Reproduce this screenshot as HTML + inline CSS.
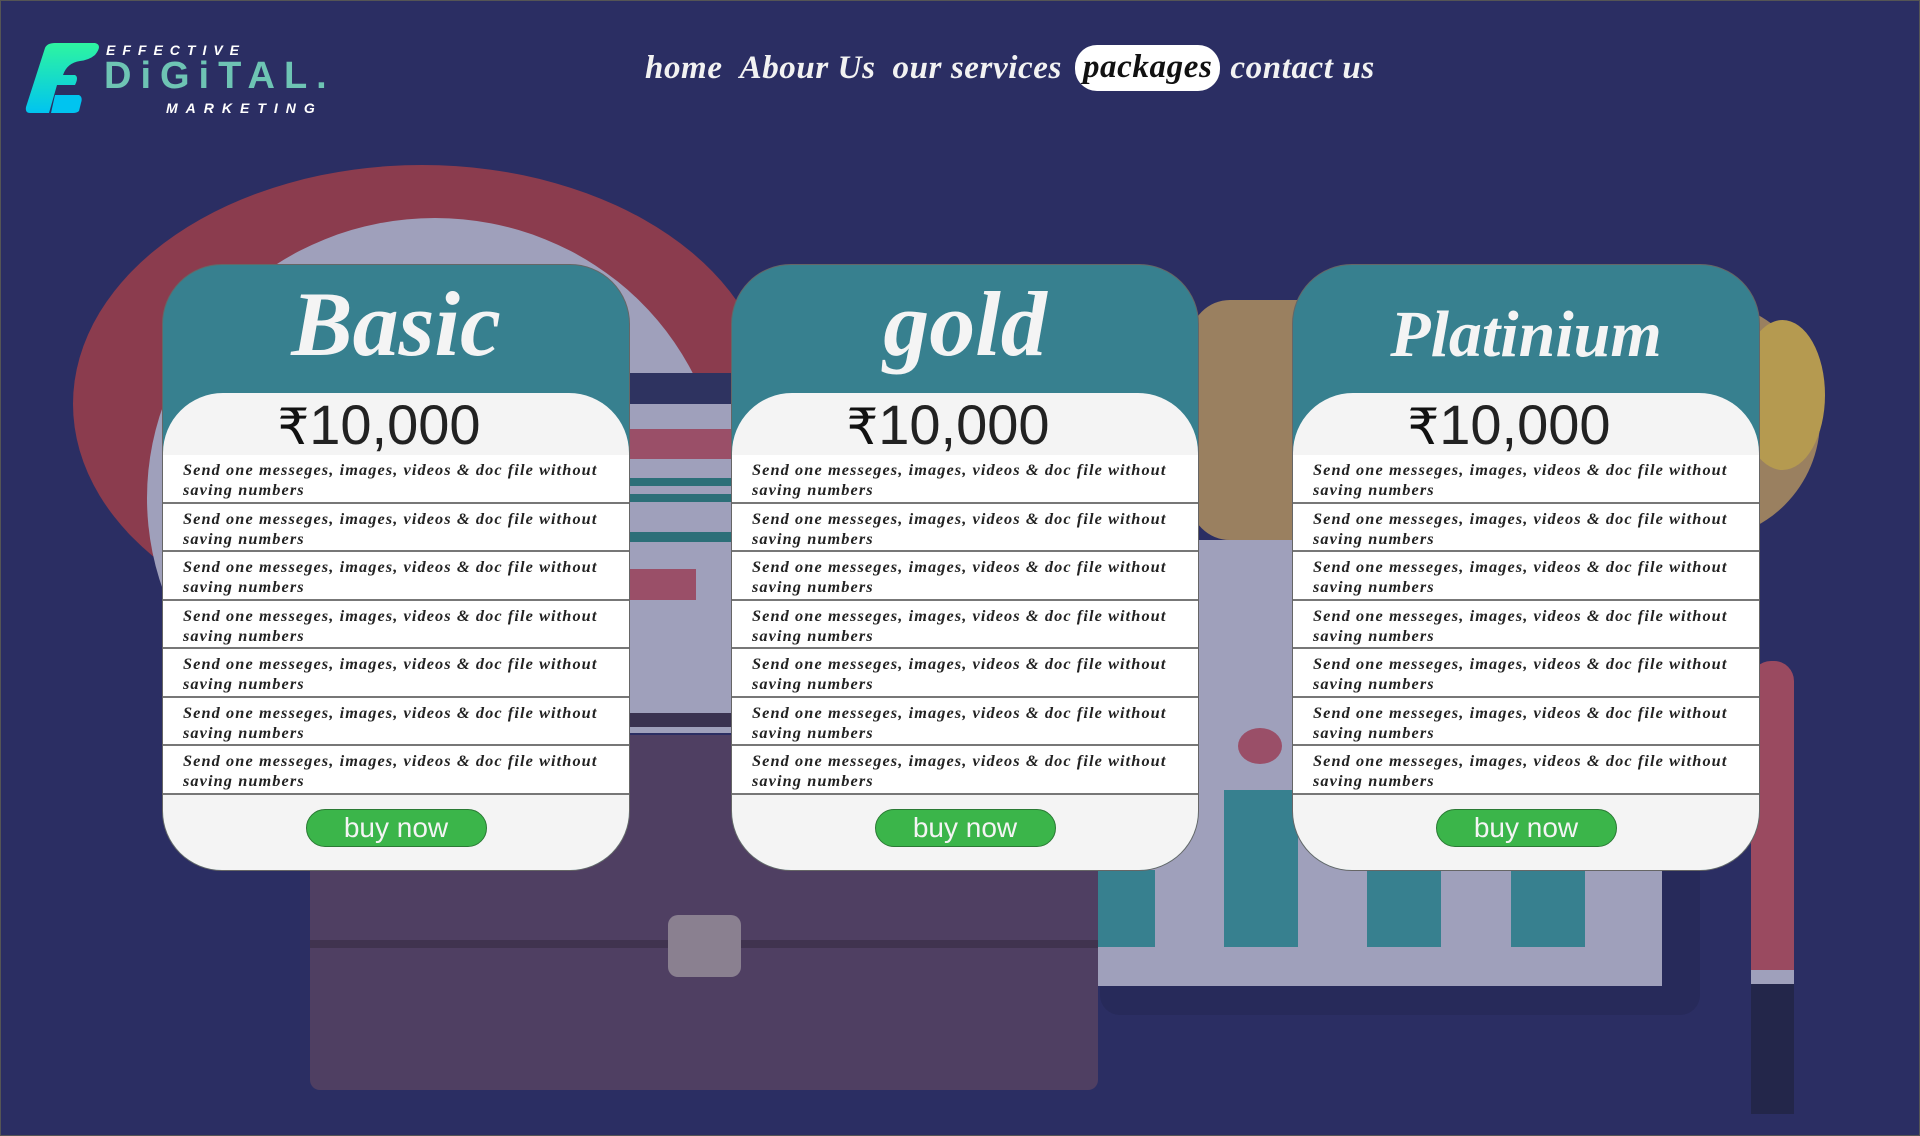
<!DOCTYPE html>
<html><head><meta charset="utf-8">
<style>
*{margin:0;padding:0;box-sizing:border-box}
html,body{width:1920px;height:1136px;overflow:hidden}
body{background:#2b2e63;position:relative;font-family:"Liberation Sans",sans-serif;outline:1px solid #555;outline-offset:-1px}
.a{position:absolute}
.nav{position:absolute;top:45px;left:645px;height:46px;display:flex;align-items:center;font-family:"Liberation Serif",serif;font-style:italic;font-weight:bold;font-size:33px;color:#f2f2f2;letter-spacing:0.6px}
.nav span{margin-right:17px;white-space:nowrap}
.nav .act{background:#fff;color:#111;border-radius:22px;padding:0 8px;height:46px;line-height:44px;margin-right:10px;margin-left:-4px}
.card{position:absolute;top:264px;width:468px;height:607px;background:#37808f;border:1px solid #666;border-radius:60px;overflow:hidden}
.card h2{height:128px;text-align:center;color:#f4f4f4;font-family:"Liberation Serif",serif;font-style:italic;font-weight:bold;font-size:92px;line-height:118px}
.price{background:#f4f4f4;height:62px;border-radius:60px 60px 0 0;text-align:center;font-size:56px;color:#222;line-height:64px;padding-right:34px}
.price b{font-family:"DejaVu Sans",sans-serif;font-weight:normal;color:#111;font-size:50px}
.row{background:#fff;border-bottom:2px solid #777;height:48.5px;padding:5px 8px 0 20px;font-family:"Liberation Serif",serif;font-style:italic;font-weight:bold;font-size:16.3px;line-height:20px;color:#222;letter-spacing:1.1px;white-space:nowrap}
.row:first-of-type{border-top:2px solid #777}
.foot{background:#f4f4f4;height:100%;text-align:center;padding-top:14px}
.btn{display:inline-block;width:181px;height:38px;border-radius:19px;background:#3bb54a;border:1px solid #2a7a34;color:#f4f4f4;font-size:28px;line-height:35px}
</style></head><body>
<div class="a" style="left:73px;top:165px;width:698px;height:478px;border-radius:50%;background:#8b3c4e"></div>
<div class="a" style="left:147px;top:218px;width:576px;height:560px;border-radius:50%;background:#9fa0bb"></div>
<div class="a" style="left:1100px;top:560px;width:600px;height:455px;background:#272a5a;border-radius:20px"></div>
<div class="a" style="left:1190px;top:300px;width:630px;height:240px;border-radius:40px 120px 120px 40px;background:#9a8060"></div>
<div class="a" style="left:1740px;top:320px;width:85px;height:150px;border-radius:50%;background:#b59a50"></div>
<div class="a" style="left:630px;top:373px;width:102px;height:360px;background:#9fa0bb"></div>
<div class="a" style="left:630px;top:373px;width:102px;height:31px;background:#2e3360"></div>
<div class="a" style="left:630px;top:429px;width:102px;height:30px;background:#9a4f68"></div>
<div class="a" style="left:630px;top:478px;width:102px;height:8px;background:#2c6f78"></div>
<div class="a" style="left:630px;top:494px;width:102px;height:8px;background:#2c6f78"></div>
<div class="a" style="left:630px;top:532px;width:102px;height:10px;background:#2c6f78"></div>
<div class="a" style="left:630px;top:569px;width:66px;height:31px;background:#9a4f68"></div>
<div class="a" style="left:630px;top:713px;width:102px;height:14px;background:#3a3250"></div>
<div class="a" style="left:1098px;top:540px;width:564px;height:446px;background:#9fa0bb"></div>
<div class="a" style="left:1098px;top:870px;width:57px;height:77px;background:#37808f"></div>
<div class="a" style="left:1224px;top:790px;width:74px;height:157px;background:#37808f"></div>
<div class="a" style="left:1367px;top:870px;width:74px;height:77px;background:#37808f"></div>
<div class="a" style="left:1511px;top:870px;width:74px;height:77px;background:#37808f"></div>
<div class="a" style="left:1238px;top:728px;width:44px;height:36px;border-radius:50%;background:#9a4f68"></div>
<div class="a" style="left:310px;top:735px;width:788px;height:355px;background:#4f3f62;border-radius:10px"></div>
<div class="a" style="left:310px;top:940px;width:788px;height:8px;background:#40334f"></div>
<div class="a" style="left:668px;top:915px;width:73px;height:62px;background:#8a8090;border-radius:10px"></div>
<div class="a" style="left:1751px;top:661px;width:43px;height:313px;background:#9a4a60;border-radius:20px 20px 0 0"></div>
<div class="a" style="left:1751px;top:970px;width:43px;height:14px;background:#9fa0bb"></div>
<div class="a" style="left:1751px;top:984px;width:43px;height:130px;background:#23264a"></div>

<svg class="a" style="left:25px;top:43px" width="80" height="72" viewBox="0 0 80 72">
<defs><linearGradient id="g" x1="0" y1="0" x2="0" y2="1"><stop offset="0" stop-color="#2ef5a0"/><stop offset="1" stop-color="#00c4f0"/></linearGradient></defs>
<path d="M20 5 Q22 0 30 0 L70 0 Q78 2 70 12 Q64 17 55 18 Q42 20 38 32 L50 32 Q54 34 50 42 L32 42 L24 70 L5 70 Q0 70 1 64 Z" fill="url(#g)"/>
<path d="M30 52 L54 52 Q58 54 56 60 L54 68 Q52 70 48 70 L26 70 Z" fill="#00c4f0"/>
</svg>
<div class="a" style="left:106px;top:42px;color:#fff;font-size:14px;font-style:italic;letter-spacing:7px;font-weight:bold">EFFECTIVE</div>
<div class="a" style="left:104px;top:56px;color:#6ec4b4;font-size:38px;letter-spacing:9px;font-weight:bold;line-height:40px">DiGiTAL.</div>
<div class="a" style="left:166px;top:100px;color:#fff;font-size:14px;font-style:italic;letter-spacing:8px;font-weight:bold">MARKETING</div>

<div class="nav"><span>home</span><span>Abour Us</span><span>our services</span><span class="act">packages</span><span>contact us</span></div>

<div class="card" style="left:162px">
<h2>Basic</h2>
<div class="price"><b>₹</b>10,000</div>
<div class="row">Send one messeges, images, videos &amp; doc file without<br>saving numbers</div>
<div class="row">Send one messeges, images, videos &amp; doc file without<br>saving numbers</div>
<div class="row">Send one messeges, images, videos &amp; doc file without<br>saving numbers</div>
<div class="row">Send one messeges, images, videos &amp; doc file without<br>saving numbers</div>
<div class="row">Send one messeges, images, videos &amp; doc file without<br>saving numbers</div>
<div class="row">Send one messeges, images, videos &amp; doc file without<br>saving numbers</div>
<div class="row">Send one messeges, images, videos &amp; doc file without<br>saving numbers</div>
<div class="foot"><span class="btn">buy now</span></div>
</div>
<div class="card" style="left:731px">
<h2>gold</h2>
<div class="price"><b>₹</b>10,000</div>
<div class="row">Send one messeges, images, videos &amp; doc file without<br>saving numbers</div>
<div class="row">Send one messeges, images, videos &amp; doc file without<br>saving numbers</div>
<div class="row">Send one messeges, images, videos &amp; doc file without<br>saving numbers</div>
<div class="row">Send one messeges, images, videos &amp; doc file without<br>saving numbers</div>
<div class="row">Send one messeges, images, videos &amp; doc file without<br>saving numbers</div>
<div class="row">Send one messeges, images, videos &amp; doc file without<br>saving numbers</div>
<div class="row">Send one messeges, images, videos &amp; doc file without<br>saving numbers</div>
<div class="foot"><span class="btn">buy now</span></div>
</div>
<div class="card" style="left:1292px">
<h2 style="font-size:66px;line-height:140px">Platinium</h2>
<div class="price"><b>₹</b>10,000</div>
<div class="row">Send one messeges, images, videos &amp; doc file without<br>saving numbers</div>
<div class="row">Send one messeges, images, videos &amp; doc file without<br>saving numbers</div>
<div class="row">Send one messeges, images, videos &amp; doc file without<br>saving numbers</div>
<div class="row">Send one messeges, images, videos &amp; doc file without<br>saving numbers</div>
<div class="row">Send one messeges, images, videos &amp; doc file without<br>saving numbers</div>
<div class="row">Send one messeges, images, videos &amp; doc file without<br>saving numbers</div>
<div class="row">Send one messeges, images, videos &amp; doc file without<br>saving numbers</div>
<div class="foot"><span class="btn">buy now</span></div>
</div>
</body></html>
